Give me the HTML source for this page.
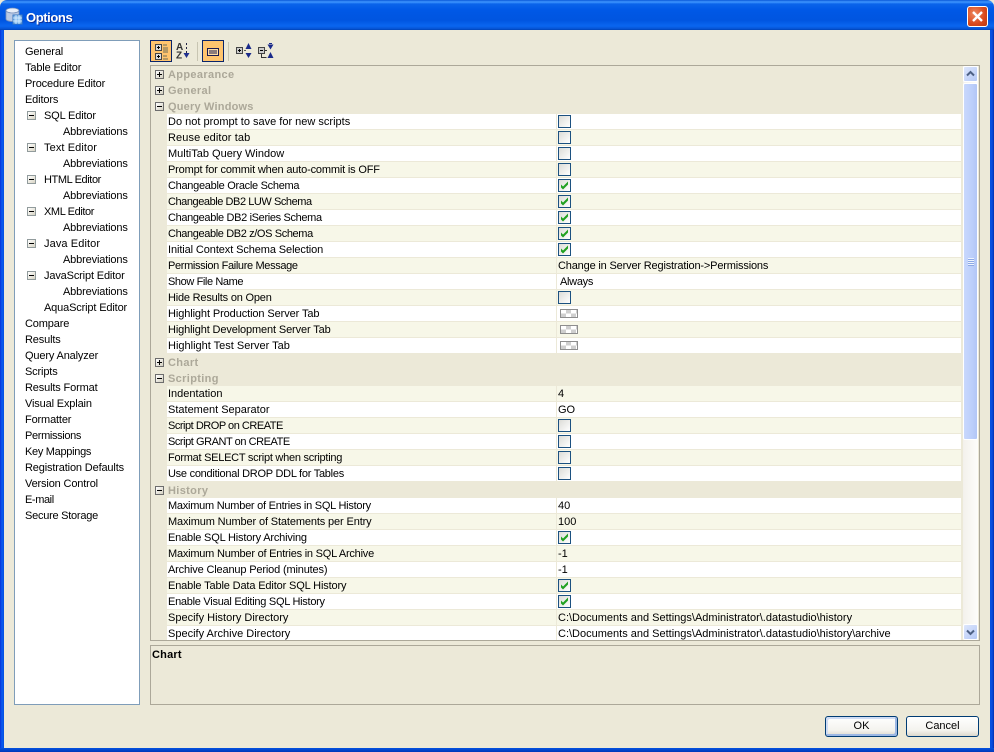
<!DOCTYPE html>
<html><head><meta charset="utf-8"><title>Options</title>
<style>
html,body{margin:0;padding:0}
body{width:994px;height:752px;overflow:hidden;position:relative;background:#ece9d8;font:11px/16px "Liberation Sans",sans-serif;color:#000}
.a{position:absolute}
#title{left:0;top:0;width:994px;height:30px;border-radius:7px 7px 0 0;background:linear-gradient(180deg,#0a58d8 0,#3f97ff 2px,#0a64ea 4px,#0058e6 10px,#0055e0 20px,#0a66f0 26px,#0552d2 29px,#0040b0 30px)}
#t{left:26px;top:10px;color:#fff;font:bold 13px/16px "Liberation Sans",sans-serif;letter-spacing:-.4px;text-shadow:1px 1px 0 #0a2f9c}
.bl{left:0;top:30px;width:4px;height:722px;background:linear-gradient(90deg,#0831d9,#0a5cf0 50%,#0550e0)}
.br{left:990px;top:30px;width:4px;height:722px;background:linear-gradient(90deg,#0550e0,#0a4de0 50%,#0030b0)}
.bb{left:0;top:748px;width:994px;height:4px;background:linear-gradient(180deg,#0552e0,#0038b8)}
#close{left:967px;top:6px;width:21px;height:21px;box-sizing:border-box;border:1px solid #fff;border-radius:3px;background:radial-gradient(circle at 35% 35%,#ee8a60,#d9481c 60%,#b83a12)}
#list{left:14px;top:40px;width:124px;height:663px;background:#fff;border:1px solid #7f9db9;letter-spacing:-.15px}
#list div{position:absolute;white-space:nowrap;height:16px;line-height:18px;margin-left:1px}
.m{position:absolute;width:9px;height:9px;box-sizing:border-box;border:1px solid #919b9c;background:linear-gradient(135deg,#fff,#d8d4c4)}
.m:after{content:"";position:absolute;left:1px;top:3px;width:5px;height:1px;background:#000}
.tb{top:40px;width:22px;height:22px;box-sizing:border-box;border:1px solid #0a246a;background:#ffc46e}
.sep{top:42px;width:1px;height:19px;background:#c8c5b2}
#grid{left:150px;top:65px;width:828px;height:574px;border:1px solid #aca899;overflow:hidden;background:#ece9d8}
#rows{position:absolute;left:0;top:0;width:810px}
.r{position:relative;height:16px;box-sizing:border-box}
.g{font-weight:bold;color:#aca899;padding-left:17px;line-height:18px;font-size:11px;letter-spacing:.35px}
.g .p{position:absolute;left:4px;top:4px;width:9px;height:9px;box-sizing:border-box;border:1px solid #6d6d6d;background:linear-gradient(135deg,#fff,#d4d0c0)}
.g .p:after{content:"";position:absolute;left:1px;top:3px;width:5px;height:1px;background:#000}
.g .pl:before{content:"";position:absolute;left:3px;top:1px;width:1px;height:5px;background:#000}
.c{position:absolute;left:16px;top:0;right:0;height:15px;background:#fff;border-bottom:1px solid #ece9d8;line-height:16px}
.r:nth-child(odd) .c{background:#f7f7e8}
.c span{position:absolute;left:1px;top:0;white-space:nowrap}
.c i{position:absolute;left:389px;top:0;width:1px;height:16px;background:#ece9d8}
.c u{position:absolute;left:391px;top:0;text-decoration:none;white-space:nowrap}
.x{position:absolute;left:391px;top:1px;width:13px;height:13px;box-sizing:border-box;border:1px solid #1c5180;background:linear-gradient(135deg,#dcdcd7,#fff)}
.x svg{position:absolute;left:0;top:0}
.h{position:absolute;left:393px;top:3px;width:18px;height:9px;box-sizing:border-box;border:1px solid #8e8e8e;background:conic-gradient(#cfcfcf 25%,#fff 0 50%,#cfcfcf 0 75%,#fff 0) 0 0/10px 7px}
#sb{left:963px;top:66px;width:15px;height:574px;background:linear-gradient(90deg,#f3f1ec,#fdfdfa)}
.sbb{position:absolute;left:0;width:15px;height:16px;box-sizing:border-box;border:1px solid #fff;border-radius:2px;background:linear-gradient(135deg,#dde6fc,#b4c8f6)}
#th{position:absolute;left:0;top:17px;width:15px;height:357px;box-sizing:border-box;border:1px solid #fff;border-radius:2px;background:linear-gradient(90deg,#c9d8fc,#bccffb 60%,#b2c6f6)}
.gr{position:absolute;left:4px;width:6px;height:1px;background:#eef4fe;box-shadow:0 1px 0 #8ca8e6}
#desc{left:150px;top:645px;width:828px;height:58px;border:1px solid #aca899}
#desc b{position:absolute;left:1px;top:1px;font-size:11px;letter-spacing:.2px}
.btn{top:716px;width:73px;height:21px;box-sizing:border-box;border:1px solid #003c74;border-radius:3px;background:linear-gradient(180deg,#fff,#f4f3ee 70%,#dcd8cc);text-align:center;line-height:19px;font-size:11px}
.ok{box-shadow:inset -2px -2px 0 #9db8e4,inset 2px 2px 0 #cfdcf4}
</style></head><body>
<div class="a" id="title"></div>
<svg class="a" style="left:5px;top:7px" width="18" height="18" viewBox="0 0 18 18">
<ellipse cx="7.5" cy="3.5" rx="6.5" ry="2.5" fill="#e8eef8" stroke="#6a88b8" stroke-width=".8"/>
<path d="M1 3.5V12c0 1.5 3 2.5 6.5 2.5S14 13.5 14 12V3.5c0 1.4-3 2.5-6.5 2.5S1 4.9 1 3.5z" fill="#b9c9e4" stroke="#7a93bd" stroke-width=".8"/>
<rect x="8" y="8" width="9" height="9" fill="#8cc0f0" stroke="#3c78c0"/>
<path d="M8 11h9M8 14h9M11 8v9M14 8v9" stroke="#dff0ff" stroke-width=".8"/>
</svg>
<div class="a" id="t">Options</div>
<div class="a" id="close"><svg width="19" height="19" viewBox="0 0 19 19" style="display:block"><path d="M5 5l9 9M14 5l-9 9" stroke="#fff" stroke-width="2.4"/></svg></div>
<div class="a bl"></div><div class="a br"></div><div class="a bb"></div>

<div class="a" id="list">
<div style="left:9px;top:2px">General</div>
<div style="left:9px;top:18px">Table Editor</div>
<div style="left:9px;top:34px">Procedure Editor</div>
<div style="left:9px;top:50px">Editors</div>
<i class="m" style="left:12px;top:70px"></i><div style="left:28px;top:66px">SQL Editor</div>
<div style="left:47px;top:82px">Abbreviations</div>
<i class="m" style="left:12px;top:102px"></i><div style="left:28px;top:98px;letter-spacing:.1px">Text Editor</div>
<div style="left:47px;top:114px">Abbreviations</div>
<i class="m" style="left:12px;top:134px"></i><div style="left:28px;top:130px;letter-spacing:-.4px">HTML Editor</div>
<div style="left:47px;top:146px">Abbreviations</div>
<i class="m" style="left:12px;top:166px"></i><div style="left:28px;top:162px;letter-spacing:-.4px">XML Editor</div>
<div style="left:47px;top:178px">Abbreviations</div>
<i class="m" style="left:12px;top:198px"></i><div style="left:28px;top:194px;letter-spacing:.1px">Java Editor</div>
<div style="left:47px;top:210px">Abbreviations</div>
<i class="m" style="left:12px;top:230px"></i><div style="left:28px;top:226px">JavaScript Editor</div>
<div style="left:47px;top:242px">Abbreviations</div>
<div style="left:28px;top:258px">AquaScript Editor</div>
<div style="left:9px;top:274px">Compare</div>
<div style="left:9px;top:290px">Results</div>
<div style="left:9px;top:306px">Query Analyzer</div>
<div style="left:9px;top:322px">Scripts</div>
<div style="left:9px;top:338px">Results Format</div>
<div style="left:9px;top:354px">Visual Explain</div>
<div style="left:9px;top:370px">Formatter</div>
<div style="left:9px;top:386px;letter-spacing:-.35px">Permissions</div>
<div style="left:9px;top:402px;letter-spacing:-.3px">Key Mappings</div>
<div style="left:9px;top:418px">Registration Defaults</div>
<div style="left:9px;top:434px">Version Control</div>
<div style="left:9px;top:450px;letter-spacing:-.4px">E-mail</div>
<div style="left:9px;top:466px;letter-spacing:-.25px">Secure Storage</div>
</div>

<div class="a tb" style="left:150px"></div>
<svg class="a" style="left:150px;top:40px" width="22" height="22" viewBox="0 0 22 22">
<rect x="5.5" y="4.5" width="6" height="6" fill="#ddd" stroke="#444"/><path d="M7 7.5h3M8.5 6v3" stroke="#000"/>
<rect x="5.5" y="13.5" width="6" height="6" fill="#ddd" stroke="#444"/><path d="M7 16.5h3M8.5 15v3" stroke="#000"/>
<path d="M13 5h4M13 8h5M13 10h5M13 12h5M13 16h4M13 19h5" stroke="#6b6b58"/>
</svg>
<svg class="a" style="left:176px;top:42px" width="16" height="20" viewBox="0 0 16 20">
<text x="0" y="8" font-family="Liberation Sans" font-size="10" font-weight="bold" fill="#333">A</text>
<text x="0" y="16.500" font-family="Liberation Sans" font-size="10" font-weight="bold" fill="#333">Z</text>
<path d="M10.500 1v2M10.500 5v2M10.500 9v3" stroke="#224"/>
<path d="M7.500 11h6l-3 5z" fill="#1f2f8f"/>
</svg>
<div class="a sep" style="left:197px"></div>
<div class="a tb" style="left:202px"></div>
<svg class="a" style="left:202px;top:40px" width="22" height="22" viewBox="0 0 22 22">
<rect x="5.500" y="8.500" width="11" height="7" fill="#ffdca6" stroke="#1a1a50"/><path d="M7 11h8M7 13h8" stroke="#1a1a50"/>
</svg>
<div class="a sep" style="left:228px"></div>
<svg class="a" style="left:235px;top:42px" width="18" height="20" viewBox="0 0 18 20">
<rect x="1.500" y="5.500" width="6" height="6" fill="#ccc" stroke="#444"/><path d="M3 8.500h3M4.500 7v3" stroke="#000"/>
<path d="M9 8.500h2" stroke="#555"/>
<path d="M13.500 1l-3 6h6zM13.500 16l-3-5h6z" fill="#1a2a8a"/>
</svg>
<svg class="a" style="left:257px;top:42px" width="18" height="20" viewBox="0 0 18 20">
<rect x="1.500" y="5.500" width="6" height="6" fill="#ccc" stroke="#444"/><path d="M3 8.500h3" stroke="#000"/>
<path d="M8 8.500h2M4.500 12v3.500h5" stroke="#333" fill="none"/>
<path d="M10.500 2.500h6l-3 5zM10.500 16l3-6 3 6z" fill="#1a2a8a"/><path d="M12 1.500h3" stroke="#1a2a8a"/>
</svg>

<svg width="0" height="0" style="position:absolute"><defs><g id="ck"><path d="M2 4.500l2 2 5-5v3l-5 5-2-2z" fill="#21a121"/></g></defs></svg>

<div class="a" id="grid"><div id="rows">
<div class="r g"><i class="p pl"></i>Appearance</div>
<div class="r g"><i class="p pl"></i>General</div>
<div class="r g" style="letter-spacing:.2px"><i class="p"></i>Query Windows</div>
<div class="r"><div class="c"><span>Do not prompt to save for new scripts</span><i></i><b class="x"></b></div></div>
<div class="r"><div class="c"><span style="letter-spacing:.1px">Reuse editor tab</span><i></i><b class="x"></b></div></div>
<div class="r"><div class="c"><span>MultiTab Query Window</span><i></i><b class="x"></b></div></div>
<div class="r"><div class="c"><span style="letter-spacing:-.17px">Prompt for commit when auto-commit is OFF</span><i></i><b class="x"></b></div></div>
<div class="r"><div class="c"><span style="letter-spacing:-.29px">Changeable Oracle Schema</span><i></i><b class="x"><svg width="11" height="11"><use href="#ck"/></svg></b></div></div>
<div class="r"><div class="c"><span style="letter-spacing:-.44px">Changeable DB2 LUW Schema</span><i></i><b class="x"><svg width="11" height="11"><use href="#ck"/></svg></b></div></div>
<div class="r"><div class="c"><span style="letter-spacing:-.35px">Changeable DB2 iSeries Schema</span><i></i><b class="x"><svg width="11" height="11"><use href="#ck"/></svg></b></div></div>
<div class="r"><div class="c"><span style="letter-spacing:-.38px">Changeable DB2 z/OS Schema</span><i></i><b class="x"><svg width="11" height="11"><use href="#ck"/></svg></b></div></div>
<div class="r"><div class="c"><span style="letter-spacing:-.1px">Initial Context Schema Selection</span><i></i><b class="x"><svg width="11" height="11"><use href="#ck"/></svg></b></div></div>
<div class="r"><div class="c"><span style="letter-spacing:-.35px">Permission Failure Message</span><i></i><u style="letter-spacing:-.17px">Change in Server Registration-&gt;Permissions</u></div></div>
<div class="r"><div class="c"><span style="letter-spacing:-.4px">Show File Name</span><i></i><u style="left:393px;letter-spacing:-.3px">Always</u></div></div>
<div class="r"><div class="c"><span style="letter-spacing:-.2px">Hide Results on Open</span><i></i><b class="x"></b></div></div>
<div class="r"><div class="c"><span style="letter-spacing:-.1px">Highlight Production Server Tab</span><i></i><b class="h"></b></div></div>
<div class="r"><div class="c"><span style="letter-spacing:-.13px">Highlight Development Server Tab</span><i></i><b class="h"></b></div></div>
<div class="r"><div class="c"><span>Highlight Test Server Tab</span><i></i><b class="h"></b></div></div>
<div class="r g"><i class="p pl"></i>Chart</div>
<div class="r g"><i class="p"></i>Scripting</div>
<div class="r"><div class="c"><span>Indentation</span><i></i><u>4</u></div></div>
<div class="r"><div class="c"><span>Statement Separator</span><i></i><u>GO</u></div></div>
<div class="r"><div class="c"><span style="letter-spacing:-.48px">Script DROP on CREATE</span><i></i><b class="x"></b></div></div>
<div class="r"><div class="c"><span style="letter-spacing:-.45px">Script GRANT on CREATE</span><i></i><b class="x"></b></div></div>
<div class="r"><div class="c"><span style="letter-spacing:-.26px">Format SELECT script when scripting</span><i></i><b class="x"></b></div></div>
<div class="r"><div class="c"><span style="letter-spacing:-.26px">Use conditional DROP DDL for Tables</span><i></i><b class="x"></b></div></div>
<div class="r g"><i class="p"></i>History</div>
<div class="r"><div class="c"><span style="letter-spacing:-.25px">Maximum Number of Entries in SQL History</span><i></i><u>40</u></div></div>
<div class="r"><div class="c"><span style="letter-spacing:-.13px">Maximum Number of Statements per Entry</span><i></i><u>100</u></div></div>
<div class="r"><div class="c"><span style="letter-spacing:-.18px">Enable SQL History Archiving</span><i></i><b class="x"><svg width="11" height="11"><use href="#ck"/></svg></b></div></div>
<div class="r"><div class="c"><span style="letter-spacing:-.22px">Maximum Number of Entries in SQL Archive</span><i></i><u>-1</u></div></div>
<div class="r"><div class="c"><span style="letter-spacing:-.16px">Archive Cleanup Period (minutes)</span><i></i><u>-1</u></div></div>
<div class="r"><div class="c"><span style="letter-spacing:-.14px">Enable Table Data Editor SQL History</span><i></i><b class="x"><svg width="11" height="11"><use href="#ck"/></svg></b></div></div>
<div class="r"><div class="c"><span style="letter-spacing:-.27px">Enable Visual Editing SQL History</span><i></i><b class="x"><svg width="11" height="11"><use href="#ck"/></svg></b></div></div>
<div class="r"><div class="c"><span>Specify History Directory</span><i></i><u>C:\Documents and Settings\Administrator\.datastudio\history</u></div></div>
<div class="r"><div class="c"><span>Specify Archive Directory</span><i></i><u>C:\Documents and Settings\Administrator\.datastudio\history\archive</u></div></div>
</div></div>

<div class="a" id="sb">
<div class="sbb" style="top:0"><svg width="13" height="14" style="display:block"><path d="M3 8.500L6.500 5 10 8.500" fill="none" stroke="#4d6185" stroke-width="2"/></svg></div>
<div id="th">
<div class="gr" style="top:174px"></div><div class="gr" style="top:176px"></div><div class="gr" style="top:178px"></div><div class="gr" style="top:180px"></div>
</div>
<div class="sbb" style="top:558px"><svg width="13" height="14" style="display:block"><path d="M3 5.500L6.500 9 10 5.500" fill="none" stroke="#4d6185" stroke-width="2"/></svg></div>
</div>

<div class="a" id="desc"><b>Chart</b></div>
<div class="a btn ok" style="left:825px">OK</div>
<div class="a btn" style="left:906px">Cancel</div>
</body></html>
